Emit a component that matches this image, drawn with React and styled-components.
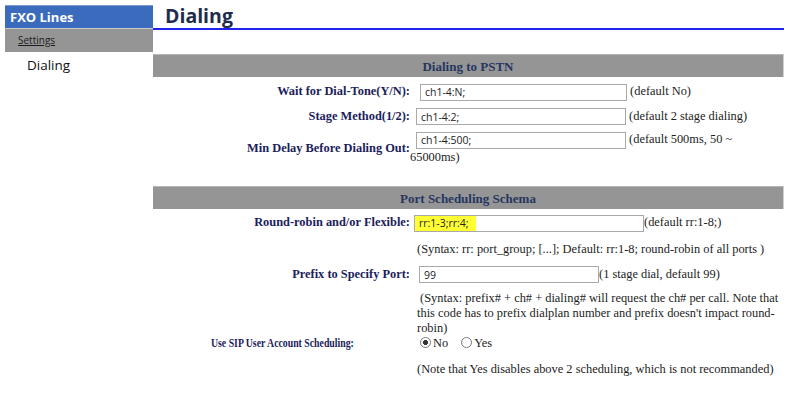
import React from 'react'
import styled, { createGlobalStyle } from 'styled-components'

const GlobalStyle = createGlobalStyle`
    body {
        margin: 0;
        background: #ffffff;
        font-family: "Liberation Serif", "Times New Roman", serif;
    }
`

const Page = styled.div`
    display: flex;
    align-items: flex-start;
    padding: 5px 0 0 5px;
    width: 780px;
`

const Sidebar = styled.nav`
    width: 148px;
    flex: none;
    font-family: "Open Sans", sans-serif;
`

const SideHeader = styled.div`
    height: 23px;
    line-height: 23px;
    padding-left: 5px;
    background: #3b6bbd;
    border-top: 1px solid #7d9ad0;
    color: #ffffff;
    font-weight: 700;
    font-size: 13px;
    box-sizing: border-box;
`

const SideGroup = styled.div`
    height: 24px;
    line-height: 23px;
    padding-left: 13px;
    background: #959595;
    border-top: 1px solid #c9c9c9;
    font-size: 10px;
    color: #1c1c1c;
    box-sizing: border-box;

    span {
        text-decoration: underline;
    }
`

const SideItem = styled.div`
    padding: 4px 0 0 22px;
    font-size: 13.5px;
    color: #111;
`

const Main = styled.main`
    width: 631px;
    flex: none;
`

const Title = styled.h1`
    margin: 0;
    height: 23px;
    line-height: 22px;
    padding-left: 12px;
    border-bottom: 2px solid #2222ee;
    font-family: "Open Sans", sans-serif;
    font-weight: 700;
    font-size: 19.5px;
    color: #1f2d4d;
`

const Section = styled.section`
    margin-top: ${p => p.$top}px;
`

const SectionBar = styled.div`
    height: 23px;
    line-height: 23px;
    background: #959595;
    border-top: 1px solid #b5b5b5;
    border-right: 1px solid #d0d0d0;
    box-sizing: border-box;
    text-align: center;
    font-weight: 700;
    font-size: 13px;
    color: #263660;
`

const Row = styled.div`
    display: grid;
    grid-template-columns: 257px 1fr;
    align-items: center;
    margin-top: ${p => p.$space}px;
`

const Label = styled.div`
    grid-column: 1;
    text-align: right;
    padding-right: ${p => p.$pad || 0}px;
    font-weight: 700;
    font-size: 12.4px;
    color: #1b1d5c;
    white-space: nowrap;
`

const NarrowText = styled.span`
    display: inline-block;
    transform: scaleX(0.79);
    transform-origin: right center;
`

const Field = styled.div`
    grid-column: 2;
    font-size: 12.4px;
    line-height: ${p => p.$lh || 15}px;
    color: #222;
    padding-left: ${p => p.$indent || 0}px;
`

const TextBox = styled.input`
    display: inline-block;
    vertical-align: middle;
    box-sizing: border-box;
    width: ${p => p.$w}px;
    height: 17px;
    margin: 0 0 0 ${p => p.$offset}px;
    padding: 0 4px;
    border: 1px solid #a9a9a9;
    font-family: "Open Sans", sans-serif;
    font-size: 10.5px;
    color: #222;
    background: ${p => p.$mark
        ? `linear-gradient(to right, #ffff33 0 ${p.$mark}px, #ffffff ${p.$mark}px)`
        : '#ffffff'};
    outline: none;
`

const Radio = styled.input`
    appearance: none;
    display: inline-block;
    vertical-align: -1px;
    width: 11px;
    height: 11px;
    margin: 0 2px 0 ${p => p.$offset}px;
    border: 1px solid #7a7a7a;
    border-radius: 50%;
    background: #fff;
    box-sizing: border-box;

    &:checked {
        background: radial-gradient(circle, #333 0 2.2px, #fff 2.8px);
    }
`

const App = () => {
    return (
        <>
            <GlobalStyle />
            <Page>
                <Sidebar>
                    <SideHeader>FXO Lines</SideHeader>
                    <SideGroup><span>Settings</span></SideGroup>
                    <SideItem>Dialing</SideItem>
                </Sidebar>
                <Main>
                    <Title>Dialing</Title>
                    <Section $top={24}>
                        <SectionBar>Dialing to PSTN</SectionBar>
                        <Row $space={6}>
                            <Label>Wait for Dial-Tone(Y/N):</Label>
                            <Field $lh={17}>
                                <TextBox $w={207} $offset={10} defaultValue="ch1-4:N;" /> (default No)
                            </Field>
                        </Row>
                        <Row $space={7}>
                            <Label>Stage Method(1/2):</Label>
                            <Field $lh={17}>
                                <TextBox $w={210} $offset={6} defaultValue="ch1-4:2;" /> (default 2 stage dialing)
                            </Field>
                        </Row>
                        <Row $space={6}>
                            <Label>Min Delay Before Dialing Out:</Label>
                            <Field $lh={17}>
                                <TextBox $w={210} $offset={6} defaultValue="ch1-4:500;" /> (default 500ms, 50 ~ 65000ms)
                            </Field>
                        </Row>
                    </Section>
                    <Section $top={20}>
                        <SectionBar>Port Scheduling Schema</SectionBar>
                        <Row $space={5}>
                            <Label>Round-robin and/or Flexible:</Label>
                            <Field $lh={17}>
                                <TextBox $w={230} $offset={4} $mark={61} defaultValue="rr:1-3;rr:4;" />(default rr:1-8;)
                            </Field>
                        </Row>
                        <Row $space={10}>
                            <Field $indent={7}>
                                (Syntax: rr: port_group; [...]; Default: rr:1-8; round-robin of all ports )
                            </Field>
                        </Row>
                        <Row $space={9}>
                            <Label>Prefix to Specify Port:</Label>
                            <Field $lh={17}>
                                <TextBox $w={180} $offset={9} defaultValue="99" />(1 stage dial, default 99)
                            </Field>
                        </Row>
                        <Row $space={8}>
                            <Field $indent={7}>
                                &nbsp;(Syntax: prefix# + ch# + dialing# will request the ch# per call. Note that this code has to prefix dialplan number and prefix doesn't impact round-robin)
                            </Field>
                        </Row>
                        <Row $space={0}>
                            <Label $pad={56}><NarrowText>Use SIP User Account Scheduling:</NarrowText></Label>
                            <Field>
                                <Radio type="radio" name="sip" $offset={10} defaultChecked />No
                                <Radio type="radio" name="sip" $offset={13} />Yes
                            </Field>
                        </Row>
                        <Row $space={11}>
                            <Field $indent={7}>
                                (Note that Yes disables above 2 scheduling, which is not recommanded)
                            </Field>
                        </Row>
                    </Section>
                </Main>
            </Page>
        </>
    )
}

export default App
